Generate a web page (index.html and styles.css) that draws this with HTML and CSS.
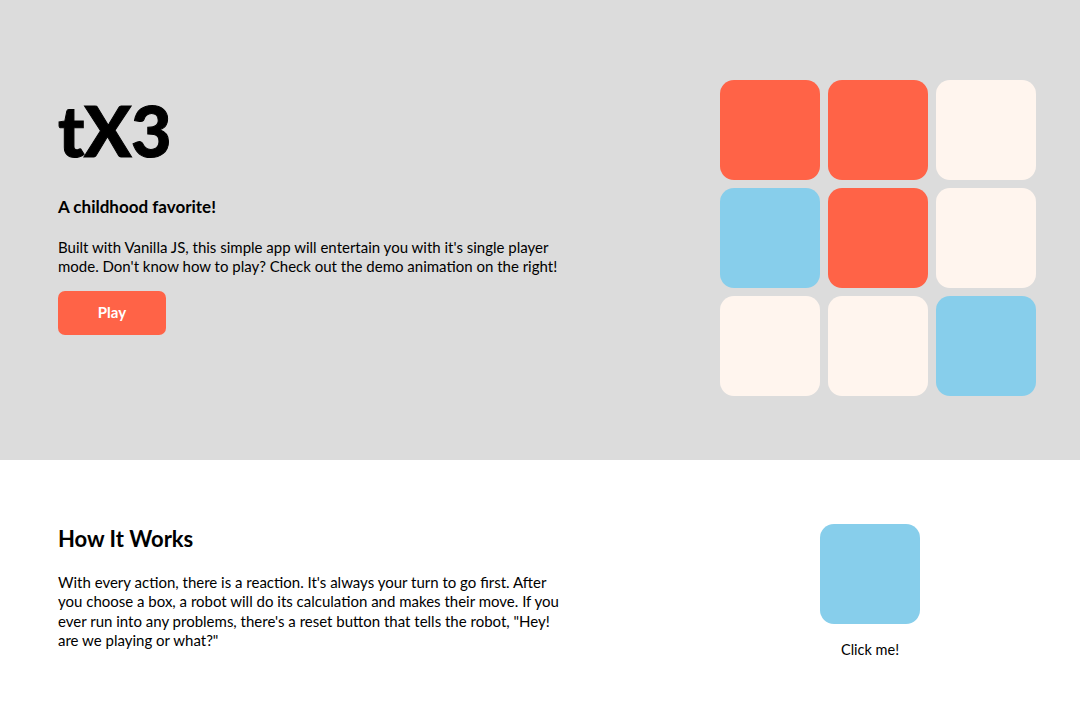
FILE: index.html
```html
<!DOCTYPE html>
<html lang="en">
<head>
<meta charset="utf-8">
<title>tX3</title>
<link rel="stylesheet" href="styles.css">
</head>
<body>
<section class="hero">
  <div class="hero-text">
    <h1 class="title">tX3</h1>
    <h2 class="tagline">A childhood favorite!</h2>
    <p class="copy">Built with Vanilla JS, this simple app will entertain you with it's single player mode. Don't know how to play? Check out the demo animation on the right!</p>
    <button class="play">Play</button>
  </div>
  <div class="board">
    <div class="tile red"></div>
    <div class="tile red"></div>
    <div class="tile empty"></div>
    <div class="tile blue"></div>
    <div class="tile red"></div>
    <div class="tile empty"></div>
    <div class="tile empty"></div>
    <div class="tile empty"></div>
    <div class="tile blue"></div>
  </div>
</section>
<section class="how">
  <div class="how-text">
    <h2 class="how-title">How It Works</h2>
    <p class="copy">With every action, there is a reaction. It's always your turn to go first. After you choose a box, a robot will do its calculation and makes their move. If you ever run into any problems, there's a reset button that tells the robot, "Hey! are we playing or what?"</p>
  </div>
  <div class="demo">
    <div class="tile blue"></div>
    <span class="demo-label">Click me!</span>
  </div>
</section>
</body>
</html>
```
FILE: styles.css
```css
html, body {
  margin: 0;
  padding: 0;
  background: #ffffff;
  font-family: Lato, "Open Sans", "Liberation Sans", sans-serif;
  color: #000;
}

.hero {
  background: #dcdcdc;
  height: 460px;
  box-sizing: border-box;
  display: flex;
  justify-content: space-between;
  align-items: flex-start;
  padding: 0 44px 0 58px;
}

.hero-text {
  width: 508px;
  padding-top: 94px;
}

.title {
  margin: 0;
  font-size: 70px;
  line-height: 72px;
  font-weight: 900;
  letter-spacing: -0.5px;
  -webkit-text-stroke: 1px #000;
}

.tagline {
  margin: 31px 0 0;
  font-size: 17px;
  line-height: 20px;
  font-weight: 700;
}

.copy {
  margin: 21px 0 0;
  font-size: 15px;
  line-height: 19px;
}

.play {
  margin-top: 15px;
  width: 108px;
  height: 44px;
  padding: 0 0 3px;
  border: none;
  border-radius: 7px;
  background: #ff6347;
  color: #fff;
  font-family: inherit;
  font-size: 15px;
  font-weight: 700;
  cursor: pointer;
  display: block;
}

.board {
  margin-top: 80px;
  display: grid;
  grid-template-columns: repeat(3, 100px);
  grid-auto-rows: 100px;
  gap: 8px;
}

.tile {
  width: 100px;
  height: 100px;
  border-radius: 14px;
}

.red { background: #ff6347; }
.blue { background: #87ceeb; }
.empty { background: #fff5ee; }

.how {
  display: flex;
  justify-content: space-between;
  align-items: flex-start;
  padding: 64px 40px 0 58px;
}

.how-text {
  width: 508px;
  padding-top: 2px;
}

.how-title {
  margin: 0;
  font-size: 22px;
  line-height: 26px;
  font-weight: 700;
}

.how-text .copy {
  margin-top: 21px;
  line-height: 19.3px;
}

.demo {
  width: 340px;
  display: flex;
  flex-direction: column;
  align-items: center;
}

.demo-label {
  margin-top: 16px;
  font-size: 14.5px;
  line-height: 20px;
}
```
